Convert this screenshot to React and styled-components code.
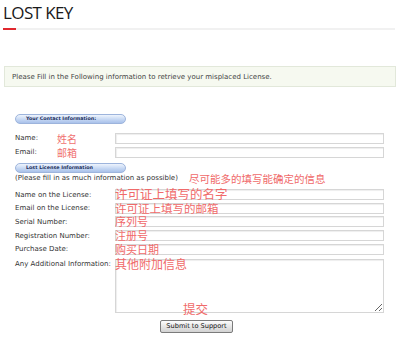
import React from "react";
import styled, { createGlobalStyle } from "styled-components";

const Global = createGlobalStyle`
  html, body {
    margin: 0;
    padding: 0;
    background: #fff;
  }
  body {
    font-family: "DejaVu Sans", Verdana, sans-serif;
    color: #333;
  }
`;

const Page = styled.div`
  width: 400px;
  height: 339px;
  overflow: hidden;
`;

const Header = styled.header`
  padding: 0 5px 0 3px;
`;

const Title = styled.h1`
  margin: 0;
  padding-top: 2px;
  font-family: "Open Sans", sans-serif;
  font-weight: 400;
  font-size: 17px;
  line-height: 22px;
  color: #1a1a1a;
  letter-spacing: -0.6px;
`;

const Rule = styled.div`
  display: flex;
  align-items: flex-end;
  margin-top: 3px;
  height: 3px;
`;

const RedMark = styled.span`
  width: 13px;
  height: 2px;
  background: #e0282e;
`;

const GreyLine = styled.span`
  flex: 1;
  height: 2px;
  background: #f1f1f1;
`;

const Notice = styled.div`
  margin: 36px 4px 0;
  height: 19px;
  border: 1px solid #e2e8da;
  background: #f6f9f0;
  display: flex;
  align-items: center;
  padding-left: 7px;
  font-size: 7px;
  color: #444;
`;

const Form = styled.form`
  padding: 27px 16px 0 15px;
`;

const Pill = styled.div`
  width: 99px;
  height: 8px;
  border: 1px solid #9db4dc;
  border-radius: 5px;
  background: linear-gradient(#eef4fd, #c2d5f2 60%, #a9c1ea);
  font-size: 4.8px;
  line-height: 8px;
  padding-left: ${(p) => p.indent}px;
  color: #1d2f5c;
  font-weight: bold;
  box-sizing: content-box;
  white-space: nowrap;
`;

const Rows = styled.div`
  display: grid;
  grid-template-columns: 100px 1fr;
  grid-auto-rows: minmax(${(p) => p.step}px, auto);
  align-items: center;
  margin-top: ${(p) => p.top}px;
`;

const Label = styled.label`
  font-size: 7px;
  color: #333;
  white-space: nowrap;
  align-self: ${(p) => (p.top ? "start" : "center")};
  padding-top: ${(p) => (p.top ? 4 : 0)}px;
`;

const LabelCell = styled.div`
  position: relative;
  display: flex;
  align-items: center;
`;

const LabelNote = styled.span`
  position: absolute;
  left: 42px;
  font-family: "Noto Sans CJK SC", sans-serif;
  font-size: 10px;
  color: #f07070;
`;

const Field = styled.div`
  position: relative;
  height: ${(p) => p.h || 11}px;
  align-self: ${(p) => (p.tall ? "start" : "center")};
  margin-top: ${(p) => (p.tall ? 3 : 0)}px;
`;

const Input = styled.input`
  display: block;
  box-sizing: border-box;
  width: 100%;
  height: 100%;
  margin: 0;
  border: 1px solid #d6d6d6;
  box-shadow: inset 1px 1px 1px #eee;
  background: #fff;
  padding: 0;
`;

const Area = styled.textarea`
  display: block;
  box-sizing: border-box;
  width: 100%;
  height: 100%;
  margin: 0;
  border: 1px solid #d6d6d6;
  box-shadow: inset 1px 1px 1px #eee;
  background: #fff;
  resize: both;
  padding: 0;
`;

const Note = styled.span`
  position: absolute;
  left: 0;
  top: ${(p) => p.dy ?? 0}px;
  font-family: "Noto Sans CJK SC", sans-serif;
  font-size: ${(p) => p.size || 11}px;
  line-height: 1;
  color: #f06a6a;
  white-space: nowrap;
  pointer-events: none;
`;

const Hint = styled.div`
  display: flex;
  align-items: center;
  height: 10px;
  font-size: 7px;
  color: #333;
  white-space: nowrap;
`;

const HintNote = styled.span`
  margin-left: 11px;
  font-family: "Noto Sans CJK SC", sans-serif;
  font-size: 10.5px;
  color: #f06a6a;
`;

const SubmitRow = styled.div`
  position: relative;
  display: flex;
  padding-left: 145px;
  margin-top: 7px;
`;

const SubmitNote = styled.span`
  position: absolute;
  left: 168px;
  top: -17px;
  font-family: "Noto Sans CJK SC", sans-serif;
  font-size: 12.5px;
  line-height: 1;
  color: #f06a6a;
`;

const Button = styled.button`
  height: 13px;
  width: 73px;
  padding: 0;
  border: 1px solid #7b7b7b;
  border-radius: 2px;
  background: linear-gradient(#fdfdfd, #e4e4e4 55%, #d2d2d2);
  font-family: "DejaVu Sans", sans-serif;
  font-size: 6.6px;
  color: #111;
  line-height: 11px;
`;

const Spacer = styled.div`
  height: ${(p) => p.h}px;
`;

const contact = [
  { label: "Name:", note: "姓名" },
  { label: "Email:", note: "邮箱" },
];

const license = [
  { label: "Name on the License:", note: "许可证上填写的名字", size: 12.5, dy: -1 },
  { label: "Email on the License:", note: "许可证上填写的邮箱", size: 11.5 },
  { label: "Serial Number:", note: "序列号" },
  { label: "Registration Number:", note: "注册号" },
  { label: "Purchase Date:", note: "购买日期" },
];

export default function App() {
  return (
    <Page>
      <Global />
      <Header>
        <Title>LOST KEY</Title>
        <Rule>
          <RedMark />
          <GreyLine />
        </Rule>
      </Header>

      <Notice>
        Please Fill in the Following information to retrieve your misplaced License.
      </Notice>

      <Form onSubmit={(e) => e.preventDefault()}>
        <Pill indent={10}>Your Contact Information:</Pill>
        <Rows step={14} top={7}>
          {contact.map((r) => (
            <React.Fragment key={r.label}>
              <LabelCell>
                <Label>{r.label}</Label>
                <LabelNote>{r.note}</LabelNote>
              </LabelCell>
              <Field>
                <Input type="text" />
              </Field>
            </React.Fragment>
          ))}
        </Rows>

        <Spacer h={4} />
        <Pill indent={10}>Lost License Information</Pill>
        <Hint>
          (Please fill in as much information as possible)
          <HintNote>尽可能多的填写能确定的信息</HintNote>
        </Hint>
        <Rows step={13.6} top={5}>
          {license.map((r) => (
            <React.Fragment key={r.label}>
              <Label>{r.label}</Label>
              <Field>
                <Input type="text" />
                <Note size={r.size} dy={r.dy}>{r.note}</Note>
              </Field>
            </React.Fragment>
          ))}
          <Label top>Any Additional Information:</Label>
          <Field h={54} tall>
            <Area />
            <Note size={12} dy={-1}>其他附加信息</Note>
          </Field>
        </Rows>

        <SubmitRow>
          <SubmitNote>提交</SubmitNote>
          <Button type="submit">Submit to Support</Button>
        </SubmitRow>
      </Form>
    </Page>
  );
}
